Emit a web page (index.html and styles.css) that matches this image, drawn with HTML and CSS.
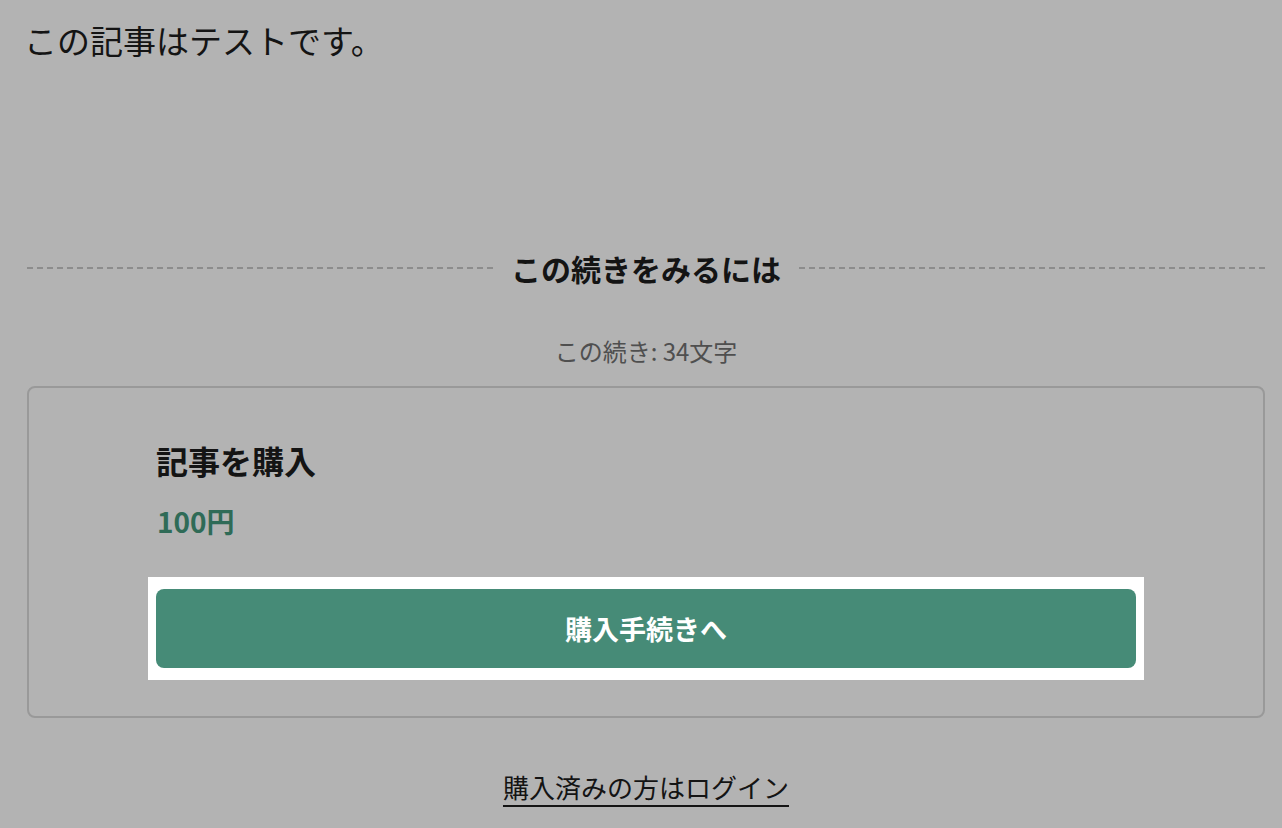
FILE: index.html
```html
<!DOCTYPE html>
<html lang="ja">
<head>
    <meta charset="UTF-8">
    <meta name="viewport" content="width=device-width, initial-scale=1.0">
    <title>記事</title>
    <link rel="stylesheet" href="styles.css">
</head>
<body>
    <div class="page">
        <p class="article-text">この記事はテストです。</p>

        <div class="paywall-head">
            <span class="paywall-line"></span>
            <h2 class="paywall-title">この続きをみるには</h2>
            <span class="paywall-line"></span>
        </div>

        <p class="paywall-count">この続き: 34文字</p>

        <section class="purchase-card">
            <h3 class="purchase-title">記事を購入</h3>
            <p class="purchase-price">100円</p>
            <div class="spotlight">
                <button class="purchase-button" type="button">購入手続きへ</button>
            </div>
        </section>

        <div class="login-wrap">
            <a class="login-link" href="#login">購入済みの方はログイン</a>
        </div>
    </div>
</body>
</html>
```

FILE: styles.css
```css
* {
    margin: 0;
    padding: 0;
    box-sizing: border-box;
}

body {
    font-family: "Noto Sans CJK JP", "Noto Sans", sans-serif;
    background-color: #b3b3b3;
    color: #141414;
}

.page {
    display: flex;
    flex-direction: column;
    padding: 0 17px 0 27px;
    width: 1282px;
}

/* Article body */
.article-text {
    font-size: 33px;
    line-height: 46px;
    margin-top: 17px;
    margin-left: -3px;
}

/* "Read more" divider */
.paywall-head {
    display: flex;
    align-items: center;
    gap: 18px;
    margin-top: 185px;
    height: 40px;
}

.paywall-line {
    flex: 1;
    border-top: 2px dashed #8c8c8c;
}

.paywall-title {
    font-size: 30px;
    line-height: 40px;
    font-weight: 700;
}

.paywall-count {
    text-align: center;
    font-size: 24px;
    line-height: 36px;
    color: #4f4f4f;
    margin-top: 45px;
}

/* Purchase card */
.purchase-card {
    margin-top: 17px;
    border: 2px solid #999;
    border-radius: 8px;
    padding: 52px 119px 36px;
    display: flex;
    flex-direction: column;
}

.purchase-title {
    font-size: 32px;
    line-height: 40px;
    font-weight: 700;
    padding-left: 8px;
}

.purchase-price {
    font-size: 28px;
    line-height: 40px;
    font-weight: 700;
    color: #2f6b57;
    margin-top: 21px;
    padding-left: 9px;
}

.spotlight {
    margin-top: 36px;
    background-color: #fff;
    padding: 12px 8px;
}

.purchase-button {
    display: block;
    width: 100%;
    height: 79px;
    border: none;
    border-radius: 8px;
    background-color: #468b77;
    color: #fff;
    font-family: inherit;
    font-size: 27px;
    font-weight: 700;
    cursor: pointer;
}

/* Login link */
.login-wrap {
    margin-top: 49px;
    text-align: center;
}

.login-link {
    font-size: 26px;
    line-height: 40px;
    color: #141414;
    text-decoration: underline;
    text-decoration-thickness: 2px;
    text-underline-offset: 7px;
}
```
